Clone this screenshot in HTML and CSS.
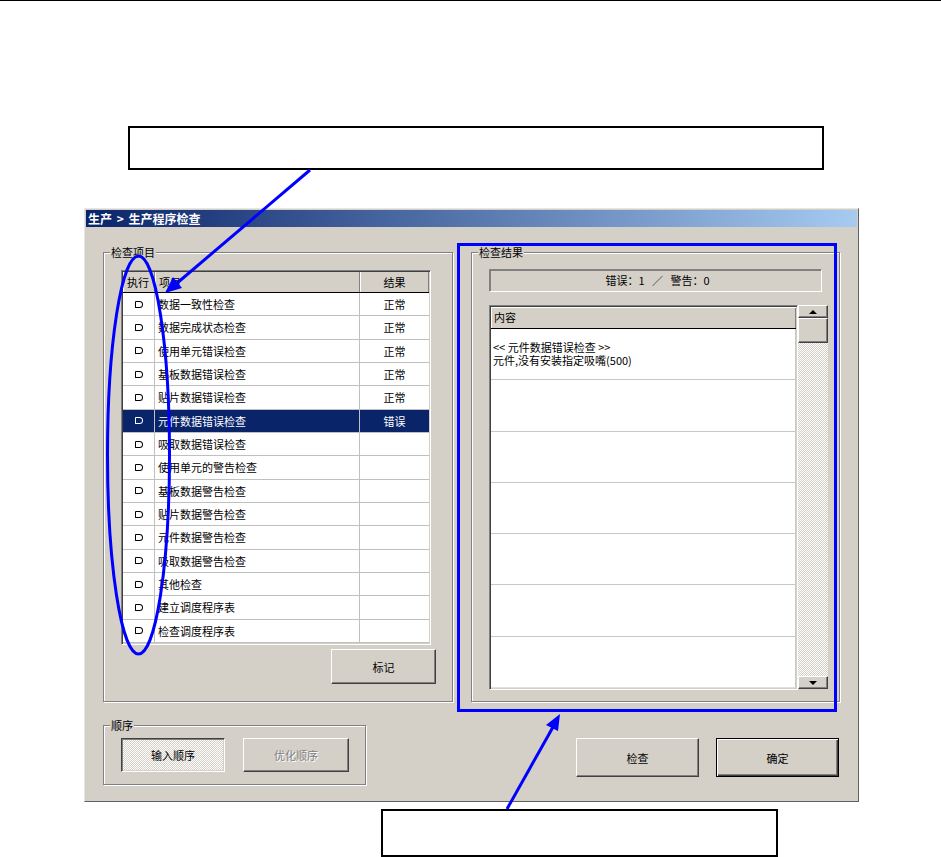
FILE: index.html
```html
<!DOCTYPE html>
<html lang="zh-CN">
<head>
<meta charset="utf-8">
<title>生产程序检查</title>
<link rel="stylesheet" href="styles.css">
</head>
<body>
<div class="page">
  <div class="rule"></div>
  <div class="note note-top"></div>

  <div class="dialog">
    <div class="titlebar">生产 &gt; 生产程序检查</div>
    <div class="dlg-body">
      <div class="group group-items">
        <span class="legend">检查项目</span>
        <div class="table">
          <div class="thead">
            <div class="th">执行</div>
            <div class="th">项目</div>
            <div class="th th-c">结果</div>
          </div>
          <div class="tbody">
            <div class="tr"><div class="td td-c"><span class="dot"></span></div><div class="td">数据一致性检查</div><div class="td td-c">正常</div></div>
            <div class="tr"><div class="td td-c"><span class="dot"></span></div><div class="td">数据完成状态检查</div><div class="td td-c">正常</div></div>
            <div class="tr"><div class="td td-c"><span class="dot"></span></div><div class="td">使用单元错误检查</div><div class="td td-c">正常</div></div>
            <div class="tr"><div class="td td-c"><span class="dot"></span></div><div class="td">基板数据错误检查</div><div class="td td-c">正常</div></div>
            <div class="tr"><div class="td td-c"><span class="dot"></span></div><div class="td">贴片数据错误检查</div><div class="td td-c">正常</div></div>
            <div class="tr sel"><div class="td td-c"><span class="dot"></span></div><div class="td">元件数据错误检查</div><div class="td td-c">错误</div></div>
            <div class="tr"><div class="td td-c"><span class="dot"></span></div><div class="td">吸取数据错误检查</div><div class="td td-c"></div></div>
            <div class="tr"><div class="td td-c"><span class="dot"></span></div><div class="td">使用单元的警告检查</div><div class="td td-c"></div></div>
            <div class="tr"><div class="td td-c"><span class="dot"></span></div><div class="td">基板数据警告检查</div><div class="td td-c"></div></div>
            <div class="tr"><div class="td td-c"><span class="dot"></span></div><div class="td">贴片数据警告检查</div><div class="td td-c"></div></div>
            <div class="tr"><div class="td td-c"><span class="dot"></span></div><div class="td">元件数据警告检查</div><div class="td td-c"></div></div>
            <div class="tr"><div class="td td-c"><span class="dot"></span></div><div class="td">吸取数据警告检查</div><div class="td td-c"></div></div>
            <div class="tr"><div class="td td-c"><span class="dot"></span></div><div class="td">其他检查</div><div class="td td-c"></div></div>
            <div class="tr"><div class="td td-c"><span class="dot"></span></div><div class="td">建立调度程序表</div><div class="td td-c"></div></div>
            <div class="tr"><div class="td td-c"><span class="dot"></span></div><div class="td">检查调度程序表</div><div class="td td-c"></div></div>
          </div>
        </div>
        <div class="btn btn-mark">标记</div>
      </div>

      <div class="group group-result">
        <span class="legend">检查结果</span>
        <div class="summary">错误：1&nbsp;&nbsp;&nbsp;／&nbsp;&nbsp;&nbsp;警告：0</div>
        <div class="listwrap">
          <div class="list">
            <div class="lhead">内容</div>
            <div class="lrows">
              <div class="lrow"><div>&lt;&lt; 元件数据错误检查 &gt;&gt;</div><div>元件,没有安装指定吸嘴(500)</div></div>
              <div class="lrow"></div>
              <div class="lrow"></div>
              <div class="lrow"></div>
              <div class="lrow"></div>
              <div class="lrow"></div>
              <div class="lrow"></div>
            </div>
          </div>
          <div class="scrollbar">
            <div class="sb-btn"><span class="arrow-up"></span></div>
            <div class="sb-thumb"></div>
            <div class="sb-track"></div>
            <div class="sb-btn"><span class="arrow-down"></span></div>
          </div>
        </div>
      </div>

      <div class="group group-order">
        <span class="legend">顺序</span>
        <div class="btn btn-pressed btn-in">输入顺序</div>
        <div class="btn btn-disabled btn-opt">优化顺序</div>
      </div>

      <div class="actions">
        <div class="btn btn-act">检查</div>
        <div class="btn btn-act btn-default">确定</div>
      </div>
    </div>
  </div>

  <div class="note note-bottom"></div>

  <svg class="marks" width="941" height="857" viewBox="0 0 941 857">
    <g stroke="#0000FF" stroke-width="3" fill="none">
      <line x1="310" y1="170" x2="176" y2="284"/>
      <ellipse cx="138.5" cy="455" rx="31" ry="199"/>
      <rect x="458.5" y="244.5" width="377" height="466"/>
      <line x1="507" y1="809" x2="553" y2="727"/>
    </g>
    <polygon fill="#0000FF" points="165,293 182,288 173,277"/>
    <polygon fill="#0000FF" points="560,714 558,731 546,725"/>
  </svg>
</div>
</body>
</html>
```
FILE: styles.css
```css
* {
  box-sizing: border-box;
}

body {
  margin: 0;
  background: #ffffff;
  font-family: "Noto Sans CJK SC", "Liberation Sans", sans-serif;
  color: #000000;
}

.page {
  position: relative;
  width: 941px;
  height: 857px;
  overflow: hidden;
}

.rule {
  height: 1px;
  background: #000000;
}

.note {
  border: 2px solid #000000;
  background: #ffffff;
}

.note-top {
  margin: 125px 0 0 128px;
  width: 696px;
  height: 44px;
}

.note-bottom {
  margin: 7px 0 0 381px;
  width: 397px;
  height: 48px;
}

/* dialog */
.dialog {
  margin: 38px 0 0 84px;
  width: 775px;
  height: 594px;
  background: #d4d0c8;
  border: 1px solid;
  border-color: #e8e6e2 #606060 #606060 #e8e6e2;
  padding: 1px;
}

.titlebar {
  height: 17px;
  line-height: 17px;
  padding-left: 2px;
  color: #ffffff;
  font-weight: bold;
  font-size: 12px;
  background: linear-gradient(to right, #0a246a, #a6caf0);
  white-space: pre;
  word-spacing: 2px;
}

.dlg-body {
  display: grid;
  grid-template-columns: 350px 369px;
  grid-template-rows: 450px 60px;
  column-gap: 18px;
  row-gap: 23px;
  padding: 25px 0 0 17px;
}

/* group boxes */
.group {
  position: relative;
  border: 1px solid #808080;
  box-shadow: 1px 1px 0 #ffffff, inset 1px 1px 0 #ffffff;
}

.legend {
  position: absolute;
  top: -8px;
  left: 6px;
  padding: 0 1px;
  background: #d4d0c8;
  font-size: 11px;
  line-height: 14px;
}

.group-items {
  display: flex;
  flex-direction: column;
  padding: 17px 0 0 17px;
}

/* left table */
.table {
  width: 310px;
  height: 375px;
  border: 1px solid;
  border-color: #808080 #ffffff #ffffff #808080;
  box-shadow: inset 1px 1px 0 #404040, inset -1px -1px 0 #d4d0c8;
  padding: 1px;
  background: #ffffff;
}

.thead {
  display: grid;
  grid-template-columns: 32px 205px 69px;
  height: 21px;
  border-bottom: 1px solid #000000;
  background: #d4d0c8;
}

.th {
  border-left: 1px solid #ffffff;
  border-right: 1px solid #808080;
  line-height: 20px;
  padding-left: 3px;
  font-size: 11px;
}

.th-c {
  text-align: center;
  padding-left: 0;
}

.tbody {
  display: grid;
  grid-template-rows: repeat(15, 1fr);
  height: 350px;
}

.tr {
  display: grid;
  grid-template-columns: 32px 205px 69px;
  border-bottom: 1px solid #c0c0c0;
}

.td {
  display: flex;
  align-items: center;
  padding-left: 3px;
  font-size: 11px;
  border-right: 1px solid #c0c0c0;
}

.td:last-child {
  border-right: none;
}

.td-c {
  justify-content: center;
  padding-left: 0;
}

.tr.sel {
  background: #0a246a;
  color: #ffffff;
}

.dot {
  display: block;
  width: 8px;
  height: 7px;
  border: 1px solid #000000;
  border-radius: 1px 4px 4px 1px;
}

.tr.sel .dot {
  border-color: #ffffff;
}

/* buttons */
.btn {
  display: flex;
  align-items: center;
  justify-content: center;
  background: #d4d0c8;
  font-size: 11px;
  border: 1px solid;
  border-color: #ffffff #404040 #404040 #ffffff;
  box-shadow: inset -1px -1px 0 #808080;
}

.btn-mark {
  width: 105px;
  height: 35px;
  margin: 4px 16px 0 auto;
}

.group-order {
  display: flex;
  gap: 18px;
  width: 263px;
  padding: 12px 0 0 17px;
}

.btn-in {
  width: 104px;
  height: 34px;
}

.btn-opt {
  width: 106px;
  height: 34px;
}

.btn-pressed {
  border-color: #404040 #ffffff #ffffff #404040;
  box-shadow: inset 1px 1px 0 #808080, inset -1px -1px 0 #d4d0c8;
  background-color: #ece9e4;
  background-image: conic-gradient(#ffffff 0 25%, #d4d0c8 0 50%, #ffffff 0 75%, #d4d0c8 0);
  background-size: 2px 2px;
}

.btn-disabled {
  color: #808080;
  text-shadow: 1px 1px 0 #ffffff;
}

.actions {
  display: flex;
  justify-content: flex-end;
  gap: 17px;
  padding: 13px 1px 0 0;
}

.btn-act {
  width: 123px;
  height: 39px;
}

.btn-default {
  border-color: #000000;
  box-shadow: inset 1px 1px 0 #ffffff, inset -1px -1px 0 #404040, inset -2px -2px 0 #808080;
}

/* right group */
.group-result {
  padding: 16px 0 0 17px;
}

.summary {
  width: 333px;
  height: 23px;
  border: 1px solid;
  border-color: #808080 #ffffff #ffffff #808080;
  box-shadow: inset 1px 1px 0 #808080;
  text-align: center;
  font-size: 11px;
  line-height: 21px;
  padding-left: 4px;
}

.listwrap {
  display: flex;
  width: 339px;
  height: 385px;
  margin-top: 13px;
}

.list {
  width: 309px;
  height: 385px;
  border: 1px solid;
  border-color: #808080 #ffffff #ffffff #808080;
  box-shadow: inset 1px 1px 0 #404040, inset -1px -1px 0 #d4d0c8;
  padding: 1px;
  background: #ffffff;
}

.lhead {
  height: 22px;
  border-bottom: 1px solid #000000;
  background: #d4d0c8;
  box-shadow: inset 1px 1px 0 #ffffff, inset -1px 0 0 #808080;
  padding-left: 3px;
  line-height: 21px;
  font-size: 11px;
}

.lrows {
  display: grid;
  grid-template-rows: repeat(7, 1fr);
  height: 359px;
}

.lrow {
  display: flex;
  flex-direction: column;
  justify-content: center;
  padding-left: 2px;
  font-size: 11px;
  line-height: 13px;
  border-bottom: 1px solid #c8c8c8;
  border-right: 1px solid #c8c8c8;
}

.lrow:last-child {
  border-bottom-color: #e0e0e0;
}

/* scrollbar */
.scrollbar {
  width: 30px;
  height: 384px;
  display: flex;
  flex-direction: column;
}

.sb-btn {
  height: 13px;
  display: flex;
  align-items: center;
  justify-content: center;
  background: #d4d0c8;
  border: 1px solid;
  border-color: #ffffff #404040 #404040 #ffffff;
  box-shadow: inset -1px -1px 0 #808080;
}

.sb-thumb {
  height: 25px;
  background: #d4d0c8;
  border: 1px solid;
  border-color: #ffffff #404040 #404040 #ffffff;
  box-shadow: inset -1px -1px 0 #808080;
}

.sb-track {
  flex: 1;
  background-image: conic-gradient(#ffffff 0 25%, #d4d0c8 0 50%, #ffffff 0 75%, #d4d0c8 0);
  background-size: 2px 2px;
}

.arrow-up {
  width: 0;
  height: 0;
  border-left: 4px solid transparent;
  border-right: 4px solid transparent;
  border-bottom: 4px solid #000000;
}

.arrow-down {
  width: 0;
  height: 0;
  border-left: 4px solid transparent;
  border-right: 4px solid transparent;
  border-top: 4px solid #000000;
}

/* annotation overlay */
.marks {
  position: absolute;
  left: 0;
  top: 0;
  pointer-events: none;
}
```
